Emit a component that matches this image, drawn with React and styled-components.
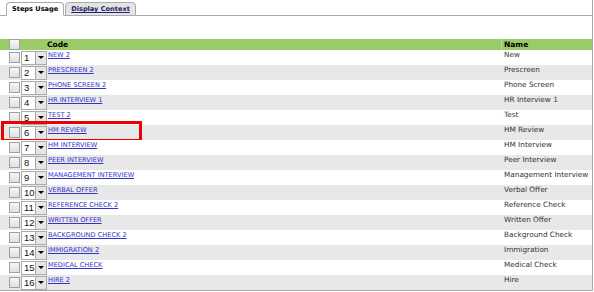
import React from 'react';
import styled, { createGlobalStyle } from 'styled-components';

const Global = createGlobalStyle`
  body {
    margin: 0;
    background: #fff;
    font-family: "DejaVu Sans", Verdana, sans-serif;
  }
`;

const Panel = styled.div`
  width: 592px;
  height: 290px;
  border-right: 1px solid #aaa;
  border-bottom: 1px solid #aaa;
  overflow: hidden;
`;

const TabBar = styled.div`
  display: flex;
  align-items: flex-end;
  height: 15px;
  padding-left: 6px;
  border-bottom: 1px solid #aaa;
`;

const Tab = styled.div`
  height: 12px;
  margin-bottom: -1px;
  padding: 0 5px;
  margin-right: 1px;
  border: 1px solid #aaa;
  border-bottom: ${p => (p.active ? '1px solid #fff' : '1px solid #aaa')};
  border-radius: 4px 4px 0 0;
  background: ${p => (p.active ? '#fff' : '#e4e4e4')};
  font-size: 6.6px;
  font-weight: bold;
  line-height: 13px;
  color: ${p => (p.active ? '#000' : '#222266')};
  text-decoration: ${p => (p.active ? 'none' : 'underline')};
`;

const Spacer = styled.div`
  height: 23px;
`;

const Row = styled.div`
  position: relative;
  display: grid;
  grid-template-columns: 21px 26px 454px 1fr;
  height: ${p => (p.header ? '11px' : '15px')};
  background: ${p => (p.header ? '#99cc66' : p.shade ? '#e8e8e8' : '#fff')};
`;

const Cell = styled.div`
  display: flex;
  align-items: ${p => (p.top ? 'flex-start' : 'center')};
  padding-left: ${p => p.pad || 0}px;
  padding-top: ${p => (p.top ? '1px' : 0)};
  white-space: nowrap;
  overflow: hidden;
  border-left: ${p => (p.divider ? '1px solid #bbdd99' : 'none')};
`;

const HeadText = styled.span`
  font-size: 7.5px;
  font-weight: bold;
  color: #000;
  line-height: 11px;
`;

const Check = styled.span`
  display: inline-block;
  width: 9px;
  height: 9px;
  margin-left: 9px;
  border: 1px solid #a0a0a0;
  background: linear-gradient(#f6f6f6, #e0e0e0);
`;

const Select = styled.div`
  box-sizing: border-box;
  display: flex;
  width: 26px;
  height: 14px;
  border: 1px solid #aaa;
  background: #fff;
`;

const SelectValue = styled.span`
  flex: 1;
  font-family: "Liberation Sans", Arial, sans-serif;
  font-size: 9.5px;
  line-height: 12px;
  padding-left: 2px;
  color: #111;
`;

const SelectArrow = styled.span`
  width: 10px;
  display: flex;
  align-items: center;
  justify-content: center;
  background: #e6e6e6;
  border-left: 1px solid #aaa;
  &::after {
    content: '';
    border-left: 3px solid transparent;
    border-right: 3px solid transparent;
    border-top: 3px solid #000;
  }
`;

const CodeLink = styled.a`
  font-size: 6.6px;
  color: #3333cc;
  text-decoration: underline;
  line-height: 8px;
`;

const NameText = styled.span`
  font-size: 7.3px;
  color: #333;
  line-height: 8px;
`;

const Highlight = styled.div`
  position: absolute;
  left: 1px;
  top: -4px;
  width: 135px;
  height: 15px;
  border: 3px solid #ee0000;
  pointer-events: none;
`;

const steps = [
  ['NEW 2', 'New'],
  ['PRESCREEN 2', 'Prescreen'],
  ['PHONE SCREEN 2', 'Phone Screen'],
  ['HR INTERVIEW 1', 'HR Interview 1'],
  ['TEST 2', 'Test'],
  ['HM REVIEW', 'HM Review'],
  ['HM INTERVIEW', 'HM Interview'],
  ['PEER INTERVIEW', 'Peer Interview'],
  ['MANAGEMENT INTERVIEW', 'Management Interview'],
  ['VERBAL OFFER', 'Verbal Offer'],
  ['REFERENCE CHECK 2', 'Reference Check'],
  ['WRITTEN OFFER', 'Written Offer'],
  ['BACKGROUND CHECK 2', 'Background Check'],
  ['IMMIGRATION 2', 'Immigration'],
  ['MEDICAL CHECK', 'Medical Check'],
  ['HIRE 2', 'Hire'],
];

export default function App() {
  return (
    <>
      <Global />
      <Panel>
        <TabBar>
          <Tab active>Steps Usage</Tab>
          <Tab>Display Context</Tab>
        </TabBar>
        <Spacer />
        <Row header>
          <Cell><Check /></Cell>
          <Cell />
          <Cell><HeadText>Code</HeadText></Cell>
          <Cell divider pad={2}><HeadText>Name</HeadText></Cell>
        </Row>
        {steps.map(([code, name], i) => (
          <Row key={code} shade={i % 2 === 1}>
            <Cell><Check /></Cell>
            <Cell>
              <Select>
                <SelectValue>{i + 1}</SelectValue>
                <SelectArrow />
              </Select>
            </Cell>
            <Cell top pad={1}><CodeLink href="#">{code}</CodeLink></Cell>
            <Cell top pad={3}><NameText>{name}</NameText></Cell>
            {i === 5 && <Highlight />}
          </Row>
        ))}
      </Panel>
    </>
  );
}
